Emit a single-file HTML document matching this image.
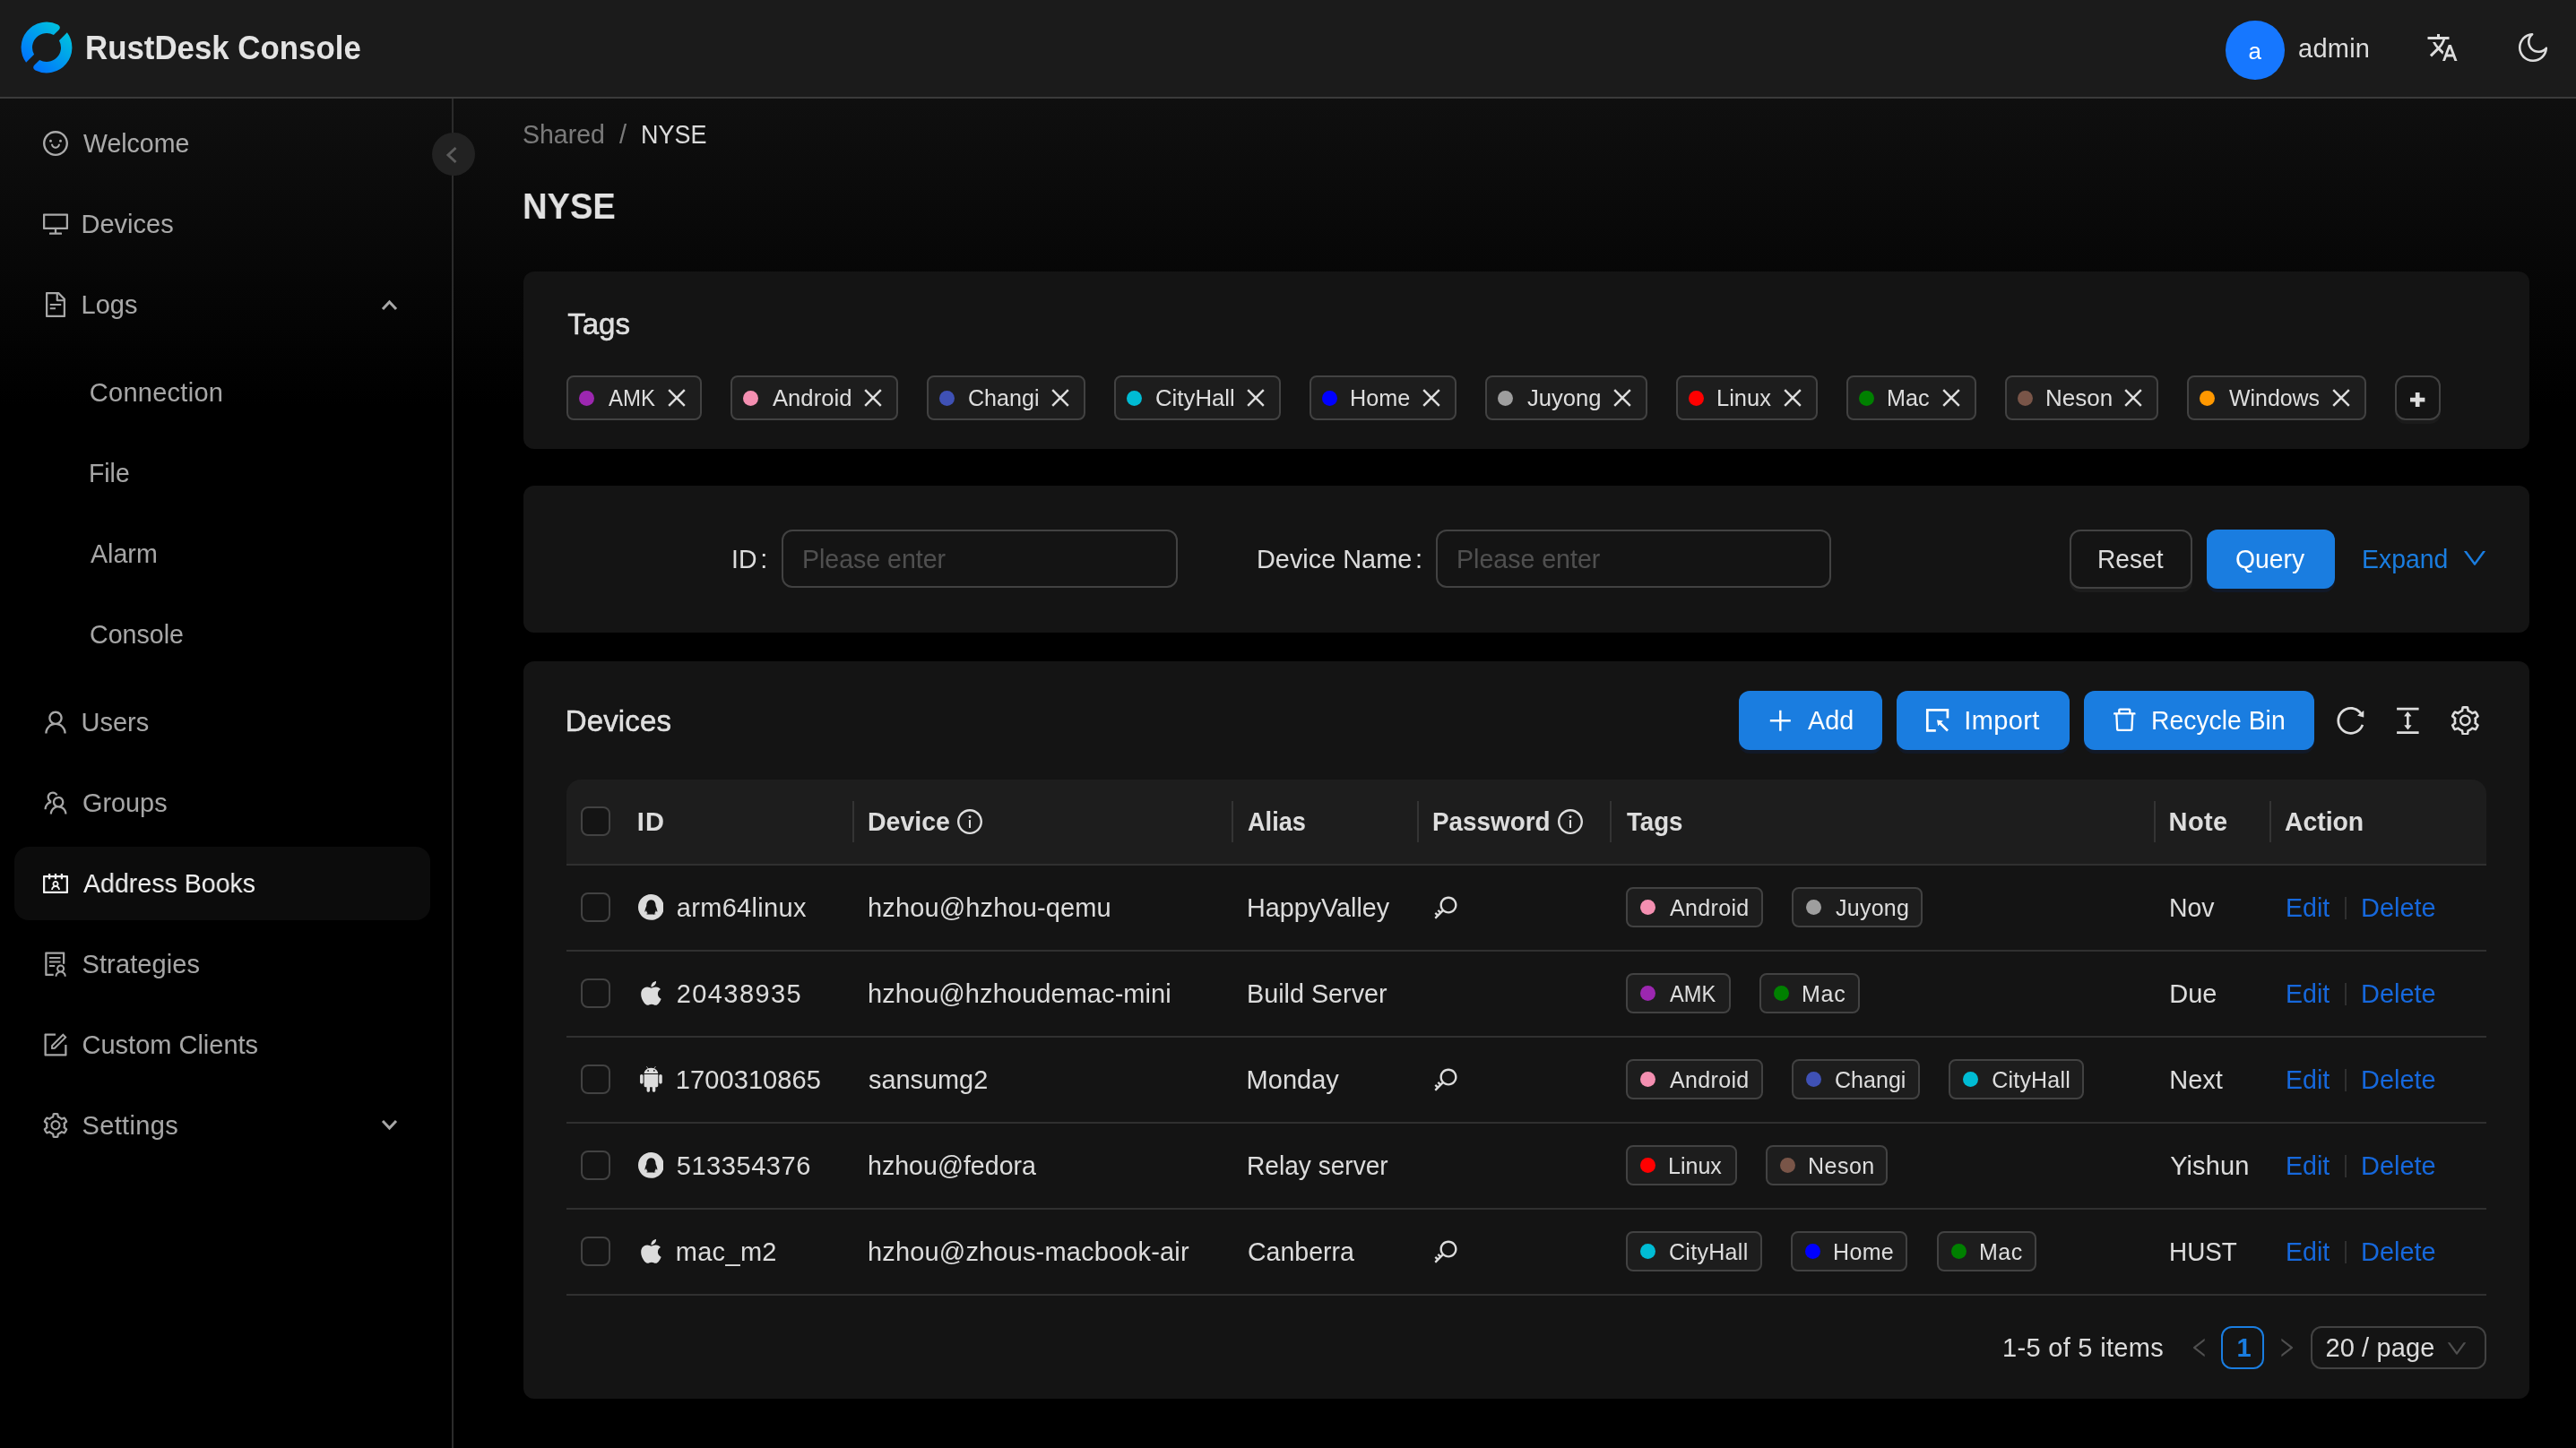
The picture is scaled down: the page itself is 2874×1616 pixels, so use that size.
<!DOCTYPE html><html lang="en"><head><meta charset="utf-8"><title>RustDesk Console</title><style>
*{box-sizing:border-box}
html,body{margin:0;padding:0}
body{width:2874px;height:1616px;overflow:hidden;position:relative;background:linear-gradient(#141414,#000 28%);font-family:"Liberation Sans",sans-serif;font-size:29px;color:rgba(255,255,255,.85)}
ul,li,h1,h2,h3,p{margin:0;padding:0;list-style:none;font-weight:400;font-size:inherit}
#app{position:absolute;left:0;top:0;width:2874px;height:1616px;will-change:transform}
.abs,header,aside,main,section,nav{position:absolute}
.ic{display:block}
header{left:0;top:0;width:2874px;height:110px;background:#1b1b1b;border-bottom:2px solid #3a3a3a}
aside{left:0;top:110px;width:506px;height:1506px;border-right:2px solid #2b2b2b}
.mi{position:absolute;left:16px;width:464px;height:82px;border-radius:16px;color:rgba(255,255,255,.65)}
.mi.sel{background:#0c0c0c;color:rgba(255,255,255,.95)}
.colbtn{position:absolute;left:482px;top:148px;width:48px;height:48px;border-radius:50%;background:#222;color:#5c5c5c}
main{left:506px;top:110px;width:2368px;height:1506px}
.card{position:absolute;left:584px;width:2238px;background:#141414;border-radius:12px}
.chip{position:absolute;border:2px solid #424242;background:#1d1d1d;border-radius:8px}
.dot{position:absolute;width:17px;height:17px;border-radius:50%}
.inp{position:absolute;border:2px solid #424242;border-radius:12px;background:#141414}
.ph{color:rgba(255,255,255,.25)}
.btn{position:absolute;border-radius:12px}
.btn.pri{background:#1a7de0;color:#fff;box-shadow:0 4px 0 rgba(0,60,180,.13)}
.btn.def{border:2px solid #424242;background:#141414;box-shadow:0 4px 0 rgba(255,255,255,.04)}
.lnk{color:#1a7de0}
.alnk{color:#1668dc}
table{position:absolute;border-collapse:separate;border-spacing:0;table-layout:fixed}
th,td{padding:0;position:relative;text-align:left;font-weight:400}
th{height:96px;background:#1d1d1d;border-bottom:2px solid #303030;font-weight:700}
td{height:96px;border-bottom:2px solid #303030}
th .sep{position:absolute;right:0;top:23.6px;width:2px;height:46px;background:#343434}
.cb{position:absolute;left:16px;top:30.3px;width:32.6px;height:32.6px;border:2px solid #424242;border-radius:8px;background:#141414}
.med{-webkit-text-stroke:.5px currentColor}
</style></head><body><div id="app"><header><svg class="abs" style="left:23px;top:24px" width="58" height="58" viewBox="0 0 58 58"><defs><linearGradient id="lg" gradientUnits="userSpaceOnUse" x1="50" y1="6" x2="10" y2="52"><stop offset="0" stop-color="#00c6dc"/><stop offset="1" stop-color="#0070ff"/></linearGradient></defs><path d="M36.86 15.06L42.27 9.64Q45.81 6.11 41.54 3.52A28.4 28.4 0 0 0 6.11 45.81L15.06 36.86A16.0 16.0 0 0 1 36.86 15.06ZM21.14 42.94L15.73 48.36Q12.19 51.89 16.46 54.48A28.4 28.4 0 0 0 51.89 12.19L42.94 21.14A16.0 16.0 0 0 1 21.14 42.94Z" fill="url(#lg)"/></svg><h1 style="position:absolute;left:95.12px;top:25.73px;height:56px;line-height:56px;font-size:37px;font-weight:700;transform:scaleX(0.9414);transform-origin:0 0;white-space:pre;color:rgba(255,255,255,.88);">RustDesk Console</h1><div class="abs" style="left:2483.30px;top:23.30px;width:65.40px;height:65.40px;border-radius:50%;background:#1677ff"></div><span style="position:absolute;left:2508.40px;top:37.80px;height:39px;line-height:39px;font-size:26px;white-space:pre;color:#fff;">a</span><span style="position:absolute;left:2564.00px;top:31.83px;height:44px;line-height:44px;letter-spacing:0.250px;white-space:pre;">admin</span><svg class="ic" viewBox="0 0 24 24" width="36" height="36" fill="currentColor" style="position:absolute;left:2706.5px;top:35px"><path d="M12.870 15.070l-2.540-2.510.030-.030c1.740-1.940 2.980-4.170 3.710-6.530H17V4h-7V2H8v2H1v1.990h11.170C11.500 7.920 10.440 9.750 9 11.350 8.070 10.320 7.300 9.190 6.690 8h-2c.73 1.630 1.730 3.170 2.980 4.560l-5.090 5.020L4 19l5-5 3.110 3.110.76-2.040zM18.500 10h-2L12 22h2l1.120-3h4.750L21 22h2l-4.500-12zm-2.620 7l1.620-4.330L19.120 17h-3.240z"/></svg><svg class="ic" viewBox="64 64 896 896" width="36" height="36" fill="currentColor" style="position:absolute;left:2808.00px;top:35.00px;"><path d="M489.500 111.660c30.650-1.800 45.980 36.440 22.580 56.330A243.350 243.350 0 00426 354c0 134.760 109.240 244 244 244 72.580 0 139.900-31.830 186.010-86.080 19.870-23.380 58.070-8.100 56.340 22.530C900.400 745.820 725.150 912 512.500 912 291.310 912 112 732.690 112 511.500c0-211.390 164.290-386.020 374.200-399.650l.2-.01zm-81.150 79.750l-4.110 1.360C271.100 237.940 176 364.090 176 511.500 176 697.340 326.660 848 512.500 848c148.280 0 274.940-96.200 319.450-230.410l.63-1.930-.11.070a307.060 307.060 0 01-159.730 46.260L670 662c-170.100 0-308-137.900-308-308 0-58.600 16.480-114.540 46.270-162.470z"/></svg></header><aside><ul><li class="mi" style="top:8.5px"><svg class="ic" viewBox="64 64 896 896" width="28" height="28" fill="currentColor" style="position:absolute;left:32.00px;top:27.00px;"><path d="M288 421a48 48 0 1096 0 48 48 0 10-96 0zm352 0a48 48 0 1096 0 48 48 0 10-96 0zM512 64C264.6 64 64 264.6 64 512s200.6 448 448 448 448-200.6 448-448S759.4 64 512 64zm263 711c-34.2 34.2-74 61-118.300 79.800C611 874.200 562.300 884 512 884c-50.300 0-99-9.800-144.800-29.200A370.400 370.400 0 01248.900 775c-34.200-34.200-61-74-79.800-118.300C149.800 611 140 562.300 140 512s9.800-99 29.200-144.800A370.400 370.400 0 01249 248.900c34.200-34.200 74-61 118.300-79.800C413 149.800 461.700 140 512 140c50.300 0 99 9.800 144.800 29.200A370.400 370.400 0 01775.100 249c34.200 34.200 61 74 79.800 118.300C874.200 413 884 461.700 884 512s-9.800 99-29.200 144.800A368.890 368.890 0 01775 775zM664 533h-48.100c-4.200 0-7.800 3.200-8.100 7.400C604 589.900 562.500 629 512 629s-92.100-39.100-95.800-88.600c-.3-4.200-3.900-7.400-8.100-7.400H360a8 8 0 00-8 8.400c4.400 84.300 74.500 151.600 160 151.600s155.600-67.300 160-151.600a8 8 0 00-8-8.400z"/></svg><span style="position:absolute;left:76.50px;top:19.33px;height:44px;line-height:44px;transform:scaleX(0.9833);transform-origin:0 0;white-space:pre;">Welcome</span></li><li class="mi" style="top:98.5px"><svg class="ic" viewBox="64 64 896 896" width="28" height="28" fill="currentColor" style="position:absolute;left:32.00px;top:27.00px;"><path d="M928 140H96c-17.700 0-32 14.300-32 32v496c0 17.700 14.300 32 32 32h380v112H304c-8.800 0-16 7.200-16 16v48c0 4.400 3.600 8 8 8h432c4.400 0 8-3.600 8-8v-48c0-8.800-7.200-16-16-16H548V700h380c17.700 0 32-14.300 32-32V172c0-17.700-14.300-32-32-32zm-40 488H136V212h752v416z"/></svg><span style="position:absolute;left:74.50px;top:19.33px;height:44px;line-height:44px;white-space:pre;">Devices</span></li><li class="mi" style="top:188.5px"><svg class="ic" viewBox="64 64 896 896" width="28" height="28" fill="currentColor" style="position:absolute;left:32.00px;top:27.00px;"><path d="M854.600 288.600L639.400 73.400c-6-6-14.100-9.400-22.600-9.400H192c-17.700 0-32 14.300-32 32v832c0 17.700 14.300 32 32 32h640c17.700 0 32-14.300 32-32V311.300c0-8.500-3.400-16.700-9.400-22.700zM790.200 326H602V137.800L790.200 326zm1.800 562H232V136h302v216a42 42 0 0042 42h216v494zM504 618H320c-4.400 0-8 3.600-8 8v48c0 4.400 3.600 8 8 8h184c4.400 0 8-3.600 8-8v-48c0-4.400-3.600-8-8-8zM312 490v48c0 4.400 3.600 8 8 8h384c4.400 0 8-3.600 8-8v-48c0-4.400-3.600-8-8-8H320c-4.400 0-8 3.600-8 8z"/></svg><span style="position:absolute;left:74.50px;top:19.33px;height:44px;line-height:44px;white-space:pre;">Logs</span><svg class="abs" style="left:409px;top:35.0px" width="19" height="13" viewBox="0 0 19 13"><path d="M2 11 L9.500 3 L17 11" fill="none" stroke="currentColor" stroke-width="3"/></svg></li><li class="mi" style="top:286.5px"><span style="position:absolute;left:83.80px;top:19.33px;height:44px;line-height:44px;letter-spacing:0.267px;white-space:pre;">Connection</span></li><li class="mi" style="top:376.5px"><span style="position:absolute;left:82.85px;top:19.33px;height:44px;line-height:44px;transform:scaleX(0.9773);transform-origin:0 0;white-space:pre;">File</span></li><li class="mi" style="top:466.5px"><span style="position:absolute;left:84.80px;top:19.33px;height:44px;line-height:44px;transform:scaleX(0.9865);transform-origin:0 0;white-space:pre;">Alarm</span></li><li class="mi" style="top:556.5px"><span style="position:absolute;left:83.81px;top:19.33px;height:44px;line-height:44px;transform:scaleX(0.9867);transform-origin:0 0;white-space:pre;">Console</span></li><li class="mi" style="top:654.5px"><svg class="ic" viewBox="64 64 896 896" width="28" height="28" fill="currentColor" style="position:absolute;left:32.00px;top:27.00px;"><path d="M858.500 763.600a374 374 0 00-80.600-119.500 375.630 375.630 0 00-119.500-80.600c-.4-.2-.8-.3-1.200-.5C719.500 518 760 444.700 760 362c0-137-111-248-248-248S264 225 264 362c0 82.700 40.500 156 102.800 201.100-.4.200-.8.300-1.200.5-44.800 18.900-85 46-119.500 80.600a375.630 375.630 0 00-80.600 119.500A371.700 371.700 0 00136 901.800a8 8 0 008 8.200h60c4.400 0 7.900-3.500 8-7.800 2-77.200 33-149.500 87.800-204.300 56.700-56.700 132-87.900 212.200-87.900s155.500 31.200 212.200 87.900C779 752.700 810 825 812 902.200c.1 4.400 3.600 7.800 8 7.800h60a8 8 0 008-8.200c-1-47.800-10.900-94.300-29.500-138.200zM512 534c-45.900 0-89.100-17.900-121.600-50.400S340 407.900 340 362c0-45.900 17.900-89.100 50.400-121.600S466.100 190 512 190s89.100 17.900 121.600 50.400S684 316.100 684 362c0 45.900-17.900 89.100-50.400 121.600S557.900 534 512 534z"/></svg><span style="position:absolute;left:74.50px;top:19.33px;height:44px;line-height:44px;white-space:pre;">Users</span></li><li class="mi" style="top:744.5px"><svg class="ic" viewBox="64 64 896 896" width="28" height="28" fill="currentColor" style="position:absolute;left:32.00px;top:27.00px;"><path d="M824.200 699.900a301.550 301.550 0 00-86.400-60.400C783.100 602.800 812 546.800 812 484c0-110.800-92.400-201.700-203.200-200-109.100 1.700-197 90.600-197 200 0 62.800 29 118.800 74.200 155.500a300.950 300.950 0 00-86.400 60.400C345 754.600 314 826.800 312 903.800a8 8 0 008 8.200h56c4.300 0 7.900-3.400 8-7.700 1.900-58 25.400-112.300 66.700-153.500A226.620 226.620 0 01612 684c60.900 0 118.200 23.700 161.300 66.800C814.500 792 838 846.300 840 904.300c.1 4.300 3.700 7.700 8 7.700h56a8 8 0 008-8.200c-2-77-33-149.200-87.800-203.900zM612 612c-34.200 0-66.400-13.300-90.500-37.500a126.860 126.860 0 01-37.500-91.800c.3-32.800 13.400-64.500 36.300-88 24-24.600 56.100-38.300 90.400-38.700 33.900-.3 66.800 12.900 91 36.600 24.800 24.300 38.400 56.800 38.400 91.400 0 34.200-13.300 66.300-37.500 90.500A127.300 127.300 0 01612 612zM361.500 510.400c-.9-8.700-1.400-17.500-1.400-26.400 0-15.900 1.500-31.400 4.300-46.500.7-3.600-1.200-7.300-4.500-8.800-13.600-6.100-26.100-14.500-36.900-25.100a127.540 127.540 0 01-38.700-95.400c.9-32.100 13.800-62.600 36.300-85.600 24.700-25.300 57.900-39.100 93.200-38.700 31.900.3 62.700 12.600 86 34.400 7.900 7.400 14.700 15.600 20.400 24.400 2 3.100 5.900 4.400 9.300 3.200 17.600-6.100 36.200-10.400 55.300-12.400 5.600-.6 8.800-6.600 6.300-11.600-32.500-64.300-98.900-108.700-175.700-109.900-110.900-1.700-203.300 89.200-203.300 199.900 0 62.800 28.900 118.800 74.200 155.500-31.800 14.700-61.100 35-86.500 60.400-54.800 54.700-85.800 126.900-87.800 204a8 8 0 008 8.200h56.100c4.300 0 7.900-3.400 8-7.700 1.900-58 25.400-112.300 66.700-153.500 29.400-29.400 65.400-49.800 104.700-59.700 3.900-1 6.500-4.700 6-8.700z"/></svg><span style="position:absolute;left:75.51px;top:19.33px;height:44px;line-height:44px;transform:scaleX(0.9946);transform-origin:0 0;white-space:pre;">Groups</span></li><li class="mi sel" style="top:834.5px"><svg class="ic" viewBox="64 64 896 896" width="28" height="28" fill="currentColor" style="position:absolute;left:32.00px;top:27.00px;"><path d="M594.300 601.500a111.800 111.800 0 0029.100-75.500c0-61.900-49.900-112-111.400-112s-111.400 50.100-111.400 112c0 29.100 11 55.500 29.100 75.500a158.090 158.090 0 00-74.600 126.100 8 8 0 008 8.400H407c4.200 0 7.600-3.300 7.900-7.500 3.800-50.600 46-90.500 97.200-90.500s93.400 40 97.200 90.500c.3 4.200 3.700 7.500 7.900 7.500H661a8 8 0 008-8.400c-2.800-53.300-32-99.700-74.700-126.100zM512 578c-28.500 0-51.700-23.300-51.700-52s23.200-52 51.700-52 51.700 23.300 51.700 52-23.200 52-51.700 52zm416-354H768v-56c0-4.400-3.600-8-8-8h-56c-4.400 0-8 3.600-8 8v56H548v-56c0-4.400-3.600-8-8-8h-56c-4.400 0-8 3.600-8 8v56H328v-56c0-4.400-3.600-8-8-8h-56c-4.400 0-8 3.600-8 8v56H96c-17.700 0-32 14.300-32 32v576c0 17.700 14.300 32 32 32h832c17.700 0 32-14.300 32-32V256c0-17.700-14.300-32-32-32zm-40 568H136V296h120v56c0 4.400 3.600 8 8 8h56c4.400 0 8-3.600 8-8v-56h148v56c0 4.400 3.600 8 8 8h56c4.400 0 8-3.600 8-8v-56h148v56c0 4.400 3.600 8 8 8h56c4.400 0 8-3.600 8-8v-56h120v496z"/></svg><span style="position:absolute;left:76.50px;top:19.33px;height:44px;line-height:44px;transform:scaleX(0.9845);transform-origin:0 0;white-space:pre;">Address Books</span></li><li class="mi" style="top:924.5px"><svg class="ic" viewBox="64 64 896 896" width="28" height="28" fill="currentColor" style="position:absolute;left:32.00px;top:27.00px;"><path d="M688 264c0-4.400-3.600-8-8-8H296c-4.400 0-8 3.600-8 8v48c0 4.400 3.600 8 8 8h384c4.400 0 8-3.600 8-8v-48zm-8 136H296c-4.400 0-8 3.600-8 8v48c0 4.400 3.600 8 8 8h384c4.400 0 8-3.600 8-8v-48c0-4.400-3.600-8-8-8zM480 544H296c-4.400 0-8 3.600-8 8v48c0 4.400 3.600 8 8 8h184c4.400 0 8-3.600 8-8v-48c0-4.400-3.600-8-8-8zm-48 308H208V148h560v344c0 4.400 3.600 8 8 8h56c4.400 0 8-3.600 8-8V108c0-17.700-14.300-32-32-32H168c-17.700 0-32 14.300-32 32v784c0 17.700 14.300 32 32 32h264c4.400 0 8-3.600 8-8v-56c0-4.400-3.600-8-8-8zm356.800-74.400c29-26.300 47.200-64.300 47.200-106.600 0-79.500-64.500-144-144-144s-144 64.500-144 144c0 42.300 18.200 80.300 47.200 106.600-57 32.500-96.200 92.700-99.200 162.100-.2 4.500 3.500 8.300 8 8.300h48.100c4.200 0 7.700-3.300 8-7.600C564 871.200 621.700 816 692 816s128 55.200 131.900 124.400c.2 4.200 3.700 7.600 8 7.600H880c4.600 0 8.200-3.800 8-8.300-2.900-69.500-42.200-129.600-99.200-162.100zM692 591c44.200 0 80 35.800 80 80s-35.800 80-80 80-80-35.800-80-80 35.800-80 80-80z"/></svg><span style="position:absolute;left:75.50px;top:19.33px;height:44px;line-height:44px;letter-spacing:0.111px;white-space:pre;">Strategies</span></li><li class="mi" style="top:1014.5px"><svg class="ic" viewBox="64 64 896 896" width="28" height="28" fill="currentColor" style="position:absolute;left:32.00px;top:27.00px;"><path d="M904 512h-56c-4.400 0-8 3.600-8 8v320H184V184h320c4.400 0 8-3.600 8-8v-56c0-4.400-3.600-8-8-8H144c-17.700 0-32 14.300-32 32v736c0 17.700 14.300 32 32 32h736c17.700 0 32-14.300 32-32V520c0-4.400-3.600-8-8-8z"/><path d="M355.900 534.900L354 653.800c-.1 8.900 7.100 16.200 16 16.200h.4l118-2.900c2-.1 4-.9 5.400-2.300l415.900-415c3.100-3.100 3.100-8.200 0-11.300L785.400 114.300c-1.600-1.600-3.600-2.300-5.700-2.300s-4.100.8-5.700 2.300l-415.800 415a8.300 8.300 0 00-2.300 5.600zm63.500 23.600L779.700 199l45.200 45.100-360.500 359.700-45.700 1.100.7-46.400z"/></svg><span style="position:absolute;left:75.50px;top:19.33px;height:44px;line-height:44px;white-space:pre;">Custom Clients</span></li><li class="mi" style="top:1104.5px"><svg class="ic" viewBox="64 64 896 896" width="28" height="28" fill="currentColor" style="position:absolute;left:32.00px;top:27.00px;"><path d="M924.800 625.700l-65.500-56c3.100-19 4.700-38.400 4.700-57.800s-1.600-38.800-4.700-57.800l65.500-56a32.030 32.030 0 009.300-35.200l-.9-2.600a442.090 442.090 0 00-79.700-137.900l-1.800-2.100a32.120 32.120 0 00-35.100-9.500l-81.300 28.900c-30-24.600-63.500-44-99.700-57.600l-15.700-85a32.050 32.050 0 00-25.800-25.700l-2.700-.5c-52.100-9.400-106.900-9.400-159 0l-2.700.5a32.050 32.050 0 00-25.800 25.700l-15.800 85.400a351.860 351.860 0 00-99 57.400l-81.900-29.100a32 32 0 00-35.100 9.500l-1.800 2.100a446.020 446.020 0 00-79.700 137.900l-.9 2.600c-4.500 12.500-.8 26.500 9.300 35.200l66.300 56.600c-3.100 18.800-4.600 38-4.600 57.100 0 19.200 1.500 38.400 4.600 57.100L99 625.500a32.030 32.030 0 00-9.300 35.200l.9 2.600c18.100 50.400 44.900 96.900 79.700 137.900l1.800 2.100a32.120 32.120 0 0035.100 9.500l81.900-29.100c29.800 24.500 63.100 43.900 99 57.400l15.800 85.400a32.050 32.050 0 0025.800 25.700l2.700.5a449.400 449.400 0 00159 0l2.700-.5a32.050 32.050 0 0025.800-25.700l15.700-85a350 350 0 0099.700-57.600l81.300 28.900a32 32 0 0035.100-9.500l1.800-2.100c34.800-41.100 61.600-87.500 79.700-137.900l.9-2.600c4.500-12.300.8-26.300-9.300-35zM788.300 465.900c2.500 15.100 3.800 30.600 3.800 46.100s-1.300 31-3.800 46.100l-6.600 40.100 74.700 63.900a370.030 370.030 0 01-42.600 73.600L721 702.800l-31.400 25.800c-23.900 19.600-50.500 35-79.300 45.800l-38.100 14.300-17.900 97a377.500 377.500 0 01-85 0l-17.900-97.200-37.800-14.500c-28.500-10.800-55-26.200-78.700-45.700l-31.400-25.900-93.400 33.200c-17-22.900-31.200-47.600-42.600-73.600l75.500-64.500-6.500-40c-2.400-14.900-3.700-30.300-3.700-45.500 0-15.300 1.200-30.600 3.700-45.500l6.500-40-75.500-64.500c11.300-26.100 25.600-50.700 42.600-73.600l93.400 33.200 31.400-25.900c23.700-19.500 50.200-34.900 78.700-45.700l37.900-14.300 17.900-97.200c28.100-3.200 56.800-3.200 85 0l17.900 97 38.100 14.300c28.700 10.800 55.400 26.200 79.300 45.800l31.400 25.800 92.800-32.900c17 22.900 31.200 47.600 42.600 73.600L781.800 426l6.500 39.900zM512 326c-97.200 0-176 78.800-176 176s78.800 176 176 176 176-78.800 176-176-78.800-176-176-176zm79.200 255.200A111.600 111.600 0 01512 614c-29.900 0-58-11.700-79.200-32.800A111.600 111.600 0 01400 502c0-29.900 11.700-58 32.800-79.200C454 401.600 482.100 390 512 390c29.900 0 58 11.600 79.200 32.800A111.600 111.600 0 01624 502c0 29.900-11.700 58-32.800 79.200z"/></svg><span style="position:absolute;left:75.50px;top:19.33px;height:44px;line-height:44px;letter-spacing:0.357px;white-space:pre;">Settings</span><svg class="abs" style="left:409px;top:34.0px" width="19" height="13" viewBox="0 0 19 13"><path d="M2 2 L9.500 10 L17 2" fill="none" stroke="currentColor" stroke-width="3"/></svg></li></ul></aside><div class="colbtn"><svg class="abs" style="left:15px;top:14.500px" width="14" height="20" viewBox="0 0 14 20"><path d="M11.500 2 L3 10 L11.500 18" fill="none" stroke="currentColor" stroke-width="3"/></svg></div><main><nav><span style="position:absolute;left:77.42px;top:17.83px;height:44px;line-height:44px;transform:scaleX(0.9824);transform-origin:0 0;white-space:pre;color:rgba(255,255,255,.45);">Shared</span><span style="position:absolute;left:185.00px;top:17.83px;height:44px;line-height:44px;white-space:pre;color:rgba(255,255,255,.45);">/</span><span style="position:absolute;left:208.54px;top:17.83px;height:44px;line-height:44px;transform:scaleX(0.9289);transform-origin:0 0;white-space:pre;">NYSE</span></nav><h2 style="position:absolute;left:76.56px;top:89.48px;height:62px;line-height:62px;font-size:41.5px;font-weight:700;transform:scaleX(0.9182);transform-origin:0 0;white-space:pre;color:rgba(255,255,255,.88);">NYSE</h2></main><section class="card" style="top:303px;height:198px"><h3 class="med" style="position:absolute;left:49.20px;top:34.18px;height:50px;line-height:50px;font-size:33px;white-space:pre;">Tags</h3><span class="chip" style="left:48.00px;top:116.20px;width:151.00px;height:49.40px;"><i class="dot" style="left:11.8px;top:14.50px;background:#9c27b0"></i><span style="position:absolute;left:44.80px;top:2.50px;height:40px;line-height:40px;font-size:26.5px;transform:scaleX(0.9053);transform-origin:0 0;white-space:pre;">AMK</span><svg class="abs" style="left:108.10px;top:9.70px" width="26" height="26" viewBox="0 0 26 26"><path d="M4.200 4.200L21.800 21.800M21.800 4.200L4.200 21.800" stroke="currentColor" stroke-width="2.500" fill="none"/></svg></span><span class="chip" style="left:231.00px;top:116.20px;width:186.50px;height:49.40px;"><i class="dot" style="left:11.8px;top:14.50px;background:#f48fb1"></i><span style="position:absolute;left:44.80px;top:2.50px;height:40px;line-height:40px;font-size:26.5px;transform:scaleX(0.9678);transform-origin:0 0;white-space:pre;">Android</span><svg class="abs" style="left:143.60px;top:9.70px" width="26" height="26" viewBox="0 0 26 26"><path d="M4.200 4.200L21.800 21.800M21.800 4.200L4.200 21.800" stroke="currentColor" stroke-width="2.500" fill="none"/></svg></span><span class="chip" style="left:450.00px;top:116.20px;width:177.00px;height:49.40px;"><i class="dot" style="left:11.8px;top:14.50px;background:#3f51b5"></i><span style="position:absolute;left:43.85px;top:2.50px;height:40px;line-height:40px;font-size:26.5px;transform:scaleX(0.9463);transform-origin:0 0;white-space:pre;">Changi</span><svg class="abs" style="left:134.10px;top:9.70px" width="26" height="26" viewBox="0 0 26 26"><path d="M4.200 4.200L21.800 21.800M21.800 4.200L4.200 21.800" stroke="currentColor" stroke-width="2.500" fill="none"/></svg></span><span class="chip" style="left:659.00px;top:116.20px;width:186.00px;height:49.40px;"><i class="dot" style="left:11.8px;top:14.50px;background:#00bcd4"></i><span style="position:absolute;left:43.83px;top:2.50px;height:40px;line-height:40px;font-size:26.5px;transform:scaleX(0.9730);transform-origin:0 0;white-space:pre;">CityHall</span><svg class="abs" style="left:143.10px;top:9.70px" width="26" height="26" viewBox="0 0 26 26"><path d="M4.200 4.200L21.800 21.800M21.800 4.200L4.200 21.800" stroke="currentColor" stroke-width="2.500" fill="none"/></svg></span><span class="chip" style="left:877.00px;top:116.20px;width:164.00px;height:49.40px;"><i class="dot" style="left:11.8px;top:14.50px;background:#0000ff"></i><span style="position:absolute;left:42.90px;top:2.50px;height:40px;line-height:40px;font-size:26.5px;transform:scaleX(0.9500);transform-origin:0 0;white-space:pre;">Home</span><svg class="abs" style="left:121.10px;top:9.70px" width="26" height="26" viewBox="0 0 26 26"><path d="M4.200 4.200L21.800 21.800M21.800 4.200L4.200 21.800" stroke="currentColor" stroke-width="2.500" fill="none"/></svg></span><span class="chip" style="left:1073.00px;top:116.20px;width:180.50px;height:49.40px;"><i class="dot" style="left:11.8px;top:14.50px;background:#9e9e9e"></i><span style="position:absolute;left:44.80px;top:2.50px;height:40px;line-height:40px;font-size:26.5px;transform:scaleX(0.9655);transform-origin:0 0;white-space:pre;">Juyong</span><svg class="abs" style="left:137.60px;top:9.70px" width="26" height="26" viewBox="0 0 26 26"><path d="M4.200 4.200L21.800 21.800M21.800 4.200L4.200 21.800" stroke="currentColor" stroke-width="2.500" fill="none"/></svg></span><span class="chip" style="left:1286.00px;top:116.20px;width:158.00px;height:49.40px;"><i class="dot" style="left:11.8px;top:14.50px;background:#ff0000"></i><span style="position:absolute;left:42.88px;top:2.50px;height:40px;line-height:40px;font-size:26.5px;transform:scaleX(0.9607);transform-origin:0 0;white-space:pre;">Linux</span><svg class="abs" style="left:115.10px;top:9.70px" width="26" height="26" viewBox="0 0 26 26"><path d="M4.200 4.200L21.800 21.800M21.800 4.200L4.200 21.800" stroke="currentColor" stroke-width="2.500" fill="none"/></svg></span><span class="chip" style="left:1476.00px;top:116.20px;width:145.00px;height:49.40px;"><i class="dot" style="left:11.8px;top:14.50px;background:#008000"></i><span style="position:absolute;left:42.90px;top:2.50px;height:40px;line-height:40px;font-size:26.5px;transform:scaleX(0.9500);transform-origin:0 0;white-space:pre;">Mac</span><svg class="abs" style="left:102.10px;top:9.70px" width="26" height="26" viewBox="0 0 26 26"><path d="M4.200 4.200L21.800 21.800M21.800 4.200L4.200 21.800" stroke="currentColor" stroke-width="2.500" fill="none"/></svg></span><span class="chip" style="left:1653.00px;top:116.20px;width:171.00px;height:49.40px;"><i class="dot" style="left:11.8px;top:14.50px;background:#795548"></i><span style="position:absolute;left:42.84px;top:2.50px;height:40px;line-height:40px;font-size:26.5px;transform:scaleX(0.9808);transform-origin:0 0;white-space:pre;">Neson</span><svg class="abs" style="left:128.10px;top:9.70px" width="26" height="26" viewBox="0 0 26 26"><path d="M4.200 4.200L21.800 21.800M21.800 4.200L4.200 21.800" stroke="currentColor" stroke-width="2.500" fill="none"/></svg></span><span class="chip" style="left:1856.00px;top:116.20px;width:200.00px;height:49.40px;"><i class="dot" style="left:11.8px;top:14.50px;background:#ff9800"></i><span style="position:absolute;left:44.80px;top:2.50px;height:40px;line-height:40px;font-size:26.5px;transform:scaleX(0.9402);transform-origin:0 0;white-space:pre;">Windows</span><svg class="abs" style="left:157.10px;top:9.70px" width="26" height="26" viewBox="0 0 26 26"><path d="M4.200 4.200L21.800 21.800M21.800 4.200L4.200 21.800" stroke="currentColor" stroke-width="2.500" fill="none"/></svg></span><span class="abs" style="left:2088.20px;top:116.20px;width:50.50px;height:49.40px;border:2px solid #424242;border-radius:12px;background:#141414;box-shadow:0 4px 0 rgba(255,255,255,.03)"><svg class="abs" style="left:15.100px;top:16.700px" width="16.400" height="16.400" viewBox="0 0 16 16"><path d="M8 0v16M0 8h16" stroke="currentColor" stroke-width="4.600" fill="none"/></svg></span></section><section class="card" style="top:542px;height:164px"><span style="position:absolute;left:231.54px;top:60.33px;height:44px;line-height:44px;transform:scaleX(0.9808);transform-origin:0 0;white-space:pre;">ID</span><span style="position:absolute;left:264.30px;top:60.33px;height:44px;line-height:44px;white-space:pre;">:</span><div class="inp" style="left:288.00px;top:49.30px;width:442.00px;height:65.00px;"><span class="ph" style="position:absolute;left:21.23px;top:9.03px;height:44px;line-height:44px;transform:scaleX(0.9832);transform-origin:0 0;white-space:pre;">Please enter</span></div><span style="position:absolute;left:817.51px;top:60.33px;height:44px;line-height:44px;transform:scaleX(0.9953);transform-origin:0 0;white-space:pre;">Device Name</span><span style="position:absolute;left:995.00px;top:60.33px;height:44px;line-height:44px;white-space:pre;">:</span><div class="inp" style="left:1018.00px;top:49.30px;width:441.00px;height:65.00px;"><span class="ph" style="position:absolute;left:21.03px;top:9.03px;height:44px;line-height:44px;transform:scaleX(0.9845);transform-origin:0 0;white-space:pre;">Please enter</span></div><div class="btn def" style="left:1725.00px;top:49.20px;width:137.00px;height:65.40px;"><span style="position:absolute;left:28.56px;top:9.13px;height:44px;line-height:44px;transform:scaleX(0.9703);transform-origin:0 0;white-space:pre;">Reset</span></div><div class="btn pri" style="left:1878.00px;top:49.20px;width:142.50px;height:65.40px;"><span style="position:absolute;left:31.82px;top:11.13px;height:44px;line-height:44px;transform:scaleX(0.9769);transform-origin:0 0;white-space:pre;">Query</span></div><span class="lnk" style="position:absolute;left:2051.44px;top:60.33px;height:44px;line-height:44px;transform:scaleX(0.9789);transform-origin:0 0;white-space:pre;">Expand</span><svg class="ic" viewBox="64 64 896 896" width="28" height="28" fill="currentColor" style="position:absolute;left:2162.50px;top:67.30px;color:#1a7de0;"><path d="M884 256h-75c-5.100 0-9.900 2.500-12.900 6.600L512 654.200 227.900 262.600c-3-4.100-7.800-6.600-12.900-6.600h-75c-6.500 0-10.300 7.400-6.500 12.700l352.600 486.100c12.800 17.600 39 17.600 51.700 0l352.600-486.100c3.900-5.300.1-12.700-6.400-12.700z"/></svg></section><section class="card" style="top:738px;height:822.5px"><h3 class="med" style="position:absolute;left:46.70px;top:41.98px;height:50px;line-height:50px;font-size:33px;letter-spacing:0.167px;white-space:pre;">Devices</h3><div class="btn pri" style="left:1356.00px;top:33.20px;width:160.00px;height:65.40px;"><svg class="ic" viewBox="64 64 896 896" width="28.6" height="28.6" fill="currentColor" style="position:absolute;left:31.70px;top:18.50px;"><path d="M482 152h60q8 0 8 8v704q0 8-8 8h-60q-8 0-8-8V160q0-8 8-8z"/><path d="M192 474h672q8 0 8 8v60q0 8-8 8H160q-8 0-8-8v-60q0-8 8-8z"/></svg><span style="position:absolute;left:76.90px;top:11.13px;height:44px;line-height:44px;transform:scaleX(0.9920);transform-origin:0 0;white-space:pre;">Add</span></div><div class="btn pri" style="left:1532.00px;top:33.20px;width:193.00px;height:65.40px;"><svg class="abs" style="left:30.700px;top:17.800px" width="30" height="30" viewBox="0 0 30 30"><path d="M12.800 26.300H3.300V3.300h22.600v9.300" fill="none" stroke="currentColor" stroke-width="2.700"/><path d="M26 26.500 L17 17.500" stroke="currentColor" stroke-width="2.700" fill="none"/><path d="M14 14.400 L20.800 15.600 L15.200 21.200z" fill="currentColor"/></svg><span style="position:absolute;left:75.30px;top:11.13px;height:44px;line-height:44px;letter-spacing:0.360px;white-space:pre;">Import</span></div><div class="btn pri" style="left:1741.00px;top:33.20px;width:257.00px;height:65.40px;"><svg class="ic" viewBox="64 64 896 896" width="28.6" height="28.6" fill="currentColor" style="position:absolute;left:31.40px;top:18.30px;"><path d="M360 184h-8c4.400 0 8-3.600 8-8v8h304v-8c0 4.400 3.600 8 8 8h-8v72h72v-80c0-35.300-28.700-64-64-64H352c-35.300 0-64 28.700-64 64v80h72v-72zm504 72H160c-17.700 0-32 14.300-32 32v32c0 4.400 3.600 8 8 8h60.400l24.700 523c1.600 34.100 29.800 61 63.900 61h454c34.200 0 62.300-26.800 63.900-61l24.700-523H888c4.400 0 8-3.600 8-8v-32c0-17.700-14.300-32-32-32zM731.300 840H292.700l-24.200-512h487l-24.200 512z"/></svg><span style="position:absolute;left:75.25px;top:11.13px;height:44px;line-height:44px;transform:scaleX(0.9773);transform-origin:0 0;white-space:pre;">Recycle Bin</span></div><svg class="ic" viewBox="64 64 896 896" width="32.7" height="32.7" fill="currentColor" style="position:absolute;left:2021.60px;top:49.60px;"><path d="M909.100 209.300l-56.400 44.100C775.800 155.100 656.200 92 521.900 92 290 92 102.300 279.500 102 511.500 101.700 743.700 289.800 932 521.900 932c181.300 0 335.800-115 394.600-276.100 1.500-4.200-.7-8.900-4.900-10.300l-56.700-19.500a8 8 0 00-10.100 4.800c-1.800 5-3.800 10-5.900 14.900-17.300 41-42.100 77.800-73.700 109.400A344.770 344.770 0 01655.900 829c-42.300 17.900-87.400 27-133.800 27-46.500 0-91.500-9.100-133.800-27A341.500 341.500 0 01279 755.200a342.160 342.160 0 01-73.700-109.400c-17.900-42.400-27-87.400-27-133.900s9.100-91.500 27-133.900c17.300-41 42.100-77.800 73.700-109.400 31.600-31.600 68.400-56.400 109.300-73.800 42.300-17.900 87.400-27 133.800-27 46.500 0 91.500 9.100 133.800 27a341.500 341.500 0 01109.300 73.800c9.900 9.900 19.200 20.400 27.800 31.400l-60.200 47a8 8 0 003 14.100l175.600 43c5 1.200 9.900-2.600 9.900-7.700l.8-180.900c-.1-6.600-7.800-10.300-13-6.200z"/></svg><svg class="ic" viewBox="64 64 896 896" width="32.7" height="32.7" fill="currentColor" style="position:absolute;left:2085.60px;top:49.60px;"><path d="M840 836H184c-4.400 0-8 3.600-8 8v60c0 4.400 3.600 8 8 8h656c4.400 0 8-3.600 8-8v-60c0-4.400-3.600-8-8-8zm0-724H184c-4.400 0-8 3.600-8 8v60c0 4.400 3.600 8 8 8h656c4.400 0 8-3.600 8-8v-60c0-4.400-3.600-8-8-8zM610.800 378c6 0 9.400-7 5.700-11.700L515.700 238.700a7.140 7.140 0 00-11.300 0L403.600 366.300a7.230 7.230 0 005.700 11.700H476v268h-62.800c-6 0-9.400 7-5.700 11.700l100.800 127.500c2.900 3.700 8.500 3.700 11.300 0l100.800-127.500c3.700-4.700.4-11.700-5.700-11.700H548V378h62.800z"/></svg><svg class="ic" viewBox="64 64 896 896" width="32.7" height="32.7" fill="currentColor" style="position:absolute;left:2149.80px;top:49.80px;"><path d="M924.800 625.700l-65.500-56c3.100-19 4.700-38.400 4.700-57.800s-1.600-38.800-4.700-57.800l65.500-56a32.030 32.030 0 009.300-35.200l-.9-2.600a442.090 442.090 0 00-79.700-137.900l-1.800-2.100a32.120 32.120 0 00-35.100-9.500l-81.300 28.900c-30-24.600-63.500-44-99.700-57.600l-15.700-85a32.050 32.050 0 00-25.800-25.700l-2.700-.5c-52.100-9.400-106.900-9.400-159 0l-2.700.5a32.050 32.050 0 00-25.800 25.700l-15.800 85.400a351.860 351.860 0 00-99 57.400l-81.900-29.100a32 32 0 00-35.100 9.500l-1.800 2.100a446.020 446.020 0 00-79.700 137.900l-.9 2.600c-4.500 12.500-.8 26.500 9.300 35.200l66.300 56.600c-3.100 18.800-4.600 38-4.600 57.100 0 19.200 1.500 38.400 4.600 57.100L99 625.500a32.030 32.030 0 00-9.300 35.200l.9 2.600c18.100 50.400 44.900 96.900 79.700 137.900l1.800 2.100a32.120 32.120 0 0035.100 9.500l81.900-29.100c29.800 24.500 63.100 43.900 99 57.400l15.800 85.400a32.050 32.050 0 0025.800 25.700l2.700.5a449.400 449.400 0 00159 0l2.700-.5a32.050 32.050 0 0025.800-25.700l15.700-85a350 350 0 0099.700-57.600l81.300 28.900a32 32 0 0035.100-9.500l1.800-2.100c34.800-41.100 61.600-87.500 79.700-137.900l.9-2.600c4.500-12.300.8-26.300-9.300-35zM788.300 465.900c2.500 15.100 3.800 30.600 3.800 46.100s-1.300 31-3.800 46.100l-6.600 40.100 74.700 63.900a370.030 370.030 0 01-42.600 73.600L721 702.800l-31.400 25.800c-23.900 19.600-50.500 35-79.300 45.800l-38.100 14.300-17.900 97a377.500 377.500 0 01-85 0l-17.900-97.200-37.800-14.500c-28.500-10.800-55-26.200-78.700-45.700l-31.400-25.900-93.400 33.200c-17-22.900-31.200-47.600-42.600-73.600l75.500-64.500-6.500-40c-2.400-14.900-3.700-30.300-3.700-45.500 0-15.300 1.200-30.600 3.700-45.500l6.500-40-75.500-64.500c11.300-26.100 25.600-50.700 42.600-73.600l93.400 33.200 31.400-25.900c23.700-19.500 50.200-34.900 78.700-45.700l37.900-14.300 17.900-97.200c28.100-3.200 56.800-3.200 85 0l17.900 97 38.100 14.300c28.700 10.800 55.400 26.200 79.300 45.800l31.400 25.800 92.800-32.900c17 22.900 31.200 47.600 42.600 73.600L781.800 426l6.500 39.900zM512 326c-97.200 0-176 78.800-176 176s78.800 176 176 176 176-78.800 176-176-78.800-176-176-176zm79.200 255.200A111.600 111.600 0 01512 614c-29.900 0-58-11.700-79.200-32.800A111.600 111.600 0 01400 502c0-29.900 11.700-58 32.800-79.200C454 401.600 482.100 390 512 390c29.900 0 58 11.600 79.200 32.800A111.600 111.600 0 01624 502c0 29.900-11.700 58-32.800 79.200z"/></svg><table style="left:48px;top:132px;width:2142px"><colgroup><col style="width:64px"><col style="width:257px"><col style="width:423px"><col style="width:207px"><col style="width:215px"><col style="width:607px"><col style="width:129px"><col style="width:240px"></colgroup><thead><tr><th style="border-top-left-radius:16px"><span class="cb"></span></th><th><span style="position:absolute;left:14.70px;top:25.33px;height:44px;line-height:44px;font-weight:700;letter-spacing:1.300px;white-space:pre;">ID</span><i class="sep"></i></th><th><span style="position:absolute;left:14.53px;top:25.33px;height:44px;line-height:44px;font-weight:700;transform:scaleX(0.9835);transform-origin:0 0;white-space:pre;">Device</span><svg class="ic" viewBox="64 64 896 896" width="28" height="28" fill="currentColor" style="position:absolute;left:115.20px;top:33.00px;color:rgba(255,255,255,.85)"><path d="M512 64C264.600 64 64 264.600 64 512s200.600 448 448 448 448-200.600 448-448S759.400 64 512 64zm0 820c-205.400 0-372-166.600-372-372s166.600-372 372-372 372 166.600 372 372-166.600 372-372 372z"/><path d="M464 336a48 48 0 1096 0 48 48 0 10-96 0zm72 112h-48c-4.400 0-8 3.600-8 8v272c0 4.400 3.600 8 8 8h48c4.400 0 8-3.600 8-8V456c0-4.400-3.600-8-8-8z"/></svg><i class="sep"></i></th><th><span style="position:absolute;left:15.66px;top:25.33px;height:44px;line-height:44px;font-weight:700;transform:scaleX(0.9368);transform-origin:0 0;white-space:pre;">Alias</span><i class="sep"></i></th><th><span style="position:absolute;left:14.88px;top:25.33px;height:44px;line-height:44px;font-weight:700;transform:scaleX(0.9597);transform-origin:0 0;white-space:pre;">Password</span><svg class="ic" viewBox="64 64 896 896" width="28" height="28" fill="currentColor" style="position:absolute;left:154.50px;top:33.00px;color:rgba(255,255,255,.85)"><path d="M512 64C264.600 64 64 264.600 64 512s200.600 448 448 448 448-200.600 448-448S759.400 64 512 64zm0 820c-205.400 0-372-166.600-372-372s166.600-372 372-372 372 166.600 372 372-166.600 372-372 372z"/><path d="M464 336a48 48 0 1096 0 48 48 0 10-96 0zm72 112h-48c-4.400 0-8 3.600-8 8v272c0 4.400 3.600 8 8 8h48c4.400 0 8-3.600 8-8V456c0-4.400-3.600-8-8-8z"/></svg><i class="sep"></i></th><th><span style="position:absolute;left:17.00px;top:25.33px;height:44px;line-height:44px;font-weight:700;transform:scaleX(0.9538);transform-origin:0 0;white-space:pre;">Tags</span><i class="sep"></i></th><th><span style="position:absolute;left:14.50px;top:25.33px;height:44px;line-height:44px;font-weight:700;letter-spacing:0.433px;white-space:pre;">Note</span><i class="sep"></i></th><th style="border-top-right-radius:16px"><span style="position:absolute;left:15.22px;top:25.33px;height:44px;line-height:44px;font-weight:700;transform:scaleX(0.9773);transform-origin:0 0;white-space:pre;">Action</span></th></tr></thead><tbody><tr><td><span class="cb"></span></td><td><svg class="ic" viewBox="64 64 896 896" width="28.8" height="28.8" fill="currentColor" style="position:absolute;left:15.50px;top:32.10px;"><path d="M512 64C264.600 64 64 264.600 64 512s200.600 448 448 448 448-200.600 448-448S759.400 64 512 64zm210.500 612.400c-11.500 1.400-44.900-52.700-44.900-52.700 0 31.300-16.200 72.200-51.100 101.800 16.900 5.200 54.900 19.200 45.900 34.400-7.300 12.300-125.600 7.900-159.800 4-34.200 3.800-152.500 8.300-159.800-4-9.100-15.200 28.900-29.200 45.800-34.400-35-29.500-51.100-70.400-51.100-101.800 0 0-33.400 54.100-44.900 52.700-5.400-.7-12.400-29.600 9.400-99.700 10.300-33 22-60.500 40.200-105.800-3.100-116.900 45.300-215 160.400-215 113.900 0 163.300 96.100 160.400 215 18.100 45.200 29.900 72.800 40.200 105.800 21.700 70.100 14.600 99.100 9.300 99.700z"/></svg><span style="position:absolute;left:58.70px;top:25.03px;height:44px;line-height:44px;letter-spacing:0.333px;white-space:pre;">arm64linux</span></td><td><span style="position:absolute;left:15.00px;top:25.03px;height:44px;line-height:44px;letter-spacing:0.133px;white-space:pre;">hzhou@hzhou-qemu</span></td><td><span style="position:absolute;left:14.62px;top:25.03px;height:44px;line-height:44px;transform:scaleX(0.9906);transform-origin:0 0;white-space:pre;">HappyValley</span></td><td><svg class="ic" viewBox="64 64 896 896" width="28" height="28" fill="currentColor" style="position:absolute;left:15.50px;top:32.50px;"><path d="M608 112c-167.900 0-304 136.100-304 304 0 70.300 23.900 135 63.900 186.500l-41.100 41.100-62.300-62.300a8.150 8.150 0 00-11.400 0l-39.800 39.800a8.150 8.150 0 000 11.400l62.300 62.300-44.900 44.900-62.300-62.300a8.150 8.150 0 00-11.400 0l-39.800 39.800a8.150 8.150 0 000 11.400l62.300 62.300-65.300 65.300a8.030 8.030 0 000 11.300l42.300 42.300c3.100 3.100 8.200 3.100 11.300 0l253.600-253.600A304.060 304.060 0 00608 720c167.900 0 304-136.100 304-304S775.900 112 608 112zm161.200 465.200C726.200 620.300 668.900 644 608 644c-60.900 0-118.200-23.700-161.200-66.800-43.100-43-66.800-100.300-66.800-161.200 0-60.900 23.700-118.200 66.800-161.200 43-43.100 100.300-66.800 161.200-66.800 60.900 0 118.200 23.700 161.200 66.800 43.100 43 66.800 100.300 66.800 161.200 0 60.900-23.700 118.200-66.800 161.200z"/></svg></td><td><span class="chip" style="left:16.00px;top:24.20px;width:152.50px;height:44.60px;"><i class="dot" style="left:13.8px;top:12.00px;background:#f48fb1"></i><span style="position:absolute;left:47.00px;top:2.19px;height:38px;line-height:38px;font-size:25px;letter-spacing:0.333px;white-space:pre;">Android</span></span><span class="chip" style="left:201.00px;top:24.20px;width:145.80px;height:44.60px;"><i class="dot" style="left:13.8px;top:12.00px;background:#9e9e9e"></i><span style="position:absolute;left:47.00px;top:2.19px;height:38px;line-height:38px;font-size:25px;letter-spacing:0.260px;white-space:pre;">Juyong</span></span></td><td><span style="position:absolute;left:15.24px;top:25.03px;height:44px;line-height:44px;transform:scaleX(0.9800);transform-origin:0 0;white-space:pre;">Nov</span></td><td><span class="alnk" style="position:absolute;left:16.03px;top:25.03px;height:44px;line-height:44px;transform:scaleX(0.9833);transform-origin:0 0;white-space:pre;">Edit</span><i class="abs" style="left:82.00px;top:35.00px;width:2.00px;height:25.00px;background:#303030"></i><span class="alnk" style="position:absolute;left:99.60px;top:25.03px;height:44px;line-height:44px;transform:scaleX(0.9975);transform-origin:0 0;white-space:pre;">Delete</span></td></tr><tr><td><span class="cb"></span></td><td><svg class="ic" viewBox="64 64 896 896" width="28.8" height="28.8" fill="currentColor" style="position:absolute;left:15.50px;top:32.10px;"><path d="M747.400 535.700c-.4-68.200 30.500-119.600 92.900-157.500-34.900-50-87.700-77.500-157.300-82.800-65.900-5.200-138 38.400-164.400 38.400-27.900 0-91.700-36.600-141.900-36.600C273.100 298.800 163 379.800 163 544.600c0 48.700 8.900 99 26.700 150.800 23.800 68.200 109.600 235.300 199.100 232.600 46.800-1.100 79.900-33.200 140.800-33.200 59.100 0 89.700 33.200 141.900 33.200 90.300-1.300 167.900-153.200 190.500-221.600-121.100-57.100-114.600-167.200-114.600-170.700zm-105.100-305c50.700-60.200 46.100-115 44.600-134.700-44.800 2.600-96.600 30.500-126.100 64.800-32.500 36.800-51.600 82.300-47.500 133.600 48.400 3.700 92.600-21.200 129-63.700z"/></svg><span style="position:absolute;left:58.70px;top:25.03px;height:44px;line-height:44px;letter-spacing:1.429px;white-space:pre;">20438935</span></td><td><span style="position:absolute;left:15.00px;top:25.03px;height:44px;line-height:44px;letter-spacing:0.070px;white-space:pre;">hzhou@hzhoudemac-mini</span></td><td><span style="position:absolute;left:14.62px;top:25.03px;height:44px;line-height:44px;transform:scaleX(0.9917);transform-origin:0 0;white-space:pre;">Build Server</span></td><td></td><td><span class="chip" style="left:16.00px;top:24.20px;width:116.50px;height:44.60px;"><i class="dot" style="left:13.8px;top:12.00px;background:#9c27b0"></i><span style="position:absolute;left:47.00px;top:2.19px;height:38px;line-height:38px;font-size:25px;transform:scaleX(0.9444);transform-origin:0 0;white-space:pre;">AMK</span></span><span class="chip" style="left:165.00px;top:24.20px;width:112.00px;height:44.60px;"><i class="dot" style="left:13.8px;top:12.00px;background:#008000"></i><span style="position:absolute;left:45.00px;top:2.19px;height:38px;line-height:38px;font-size:25px;letter-spacing:0.750px;white-space:pre;">Mac</span></span></td><td><span style="position:absolute;left:15.20px;top:25.03px;height:44px;line-height:44px;white-space:pre;">Due</span></td><td><span class="alnk" style="position:absolute;left:16.03px;top:25.03px;height:44px;line-height:44px;transform:scaleX(0.9833);transform-origin:0 0;white-space:pre;">Edit</span><i class="abs" style="left:82.00px;top:35.00px;width:2.00px;height:25.00px;background:#303030"></i><span class="alnk" style="position:absolute;left:99.60px;top:25.03px;height:44px;line-height:44px;transform:scaleX(0.9975);transform-origin:0 0;white-space:pre;">Delete</span></td></tr><tr><td><span class="cb"></span></td><td><svg class="ic" viewBox="64 64 896 896" width="28.8" height="28.8" fill="currentColor" style="position:absolute;left:15.50px;top:32.10px;"><path d="M270.100 741.700c0 23.400 19.100 42.500 42.600 42.500h48.700v120.400c0 30.500 24.500 55.400 54.600 55.400 30.200 0 54.600-24.800 54.600-55.400V784.100h85v120.400c0 30.500 24.500 55.400 54.600 55.400 30.200 0 54.600-24.800 54.600-55.400V784.100h48.700c23.500 0 42.600-19.100 42.600-42.500V346.400h-486v395.300zm357.100-600.100l44.900-65c2.600-3.800 2-8.900-1.500-11.400-3.500-2.400-8.500-1.200-11.100 2.600l-46.600 67.600c-30.700-12.100-64.900-18.800-100.800-18.800-35.900 0-70.100 6.700-100.800 18.800l-46.600-67.500c-2.600-3.800-7.600-5.100-11.100-2.600-3.500 2.400-4.100 7.400-1.500 11.400l44.900 65c-71.400 33.200-121.400 96.100-127.800 169.600h486c-6.600-73.600-56.700-136.500-128-169.700zM409.500 244.100a26.900 26.900 0 1126.900-26.900 26.970 26.970 0 01-26.900 26.900zm208.400 0a26.900 26.900 0 1126.900-26.900 26.970 26.970 0 01-26.900 26.900zm223.400 100.700c-30.200 0-54.600 24.800-54.600 55.400v216.400c0 30.500 24.500 55.400 54.600 55.400 30.200 0 54.600-24.800 54.600-55.400V400.100c.1-30.600-24.300-55.300-54.600-55.300zm-658.600 0c-30.200 0-54.600 24.800-54.600 55.400v216.400c0 30.500 24.500 55.400 54.600 55.400 30.200 0 54.600-24.800 54.600-55.400V400.100c0-30.600-24.500-55.300-54.600-55.300z"/></svg><span style="position:absolute;left:57.70px;top:25.03px;height:44px;line-height:44px;letter-spacing:0.111px;white-space:pre;">1700310865</span></td><td><span style="position:absolute;left:16.00px;top:25.03px;height:44px;line-height:44px;transform:scaleX(0.9955);transform-origin:0 0;white-space:pre;">sansumg2</span></td><td><span style="position:absolute;left:14.60px;top:25.03px;height:44px;line-height:44px;white-space:pre;">Monday</span></td><td><svg class="ic" viewBox="64 64 896 896" width="28" height="28" fill="currentColor" style="position:absolute;left:15.50px;top:32.50px;"><path d="M608 112c-167.900 0-304 136.100-304 304 0 70.300 23.900 135 63.900 186.500l-41.100 41.100-62.300-62.300a8.150 8.150 0 00-11.400 0l-39.800 39.800a8.150 8.150 0 000 11.400l62.300 62.300-44.900 44.900-62.300-62.300a8.150 8.150 0 00-11.400 0l-39.800 39.800a8.150 8.150 0 000 11.400l62.300 62.300-65.300 65.300a8.030 8.030 0 000 11.300l42.300 42.300c3.100 3.100 8.200 3.100 11.300 0l253.600-253.600A304.060 304.060 0 00608 720c167.900 0 304-136.100 304-304S775.900 112 608 112zm161.200 465.200C726.200 620.300 668.900 644 608 644c-60.900 0-118.200-23.700-161.200-66.800-43.100-43-66.800-100.300-66.800-161.200 0-60.900 23.700-118.200 66.800-161.200 43-43.100 100.300-66.800 161.200-66.800 60.900 0 118.200 23.700 161.200 66.800 43.100 43 66.800 100.300 66.800 161.200 0 60.900-23.700 118.200-66.800 161.200z"/></svg></td><td><span class="chip" style="left:16.00px;top:24.20px;width:152.50px;height:44.60px;"><i class="dot" style="left:13.8px;top:12.00px;background:#f48fb1"></i><span style="position:absolute;left:47.00px;top:2.19px;height:38px;line-height:38px;font-size:25px;letter-spacing:0.333px;white-space:pre;">Android</span></span><span class="chip" style="left:201.00px;top:24.20px;width:142.70px;height:44.60px;"><i class="dot" style="left:13.8px;top:12.00px;background:#3f51b5"></i><span style="position:absolute;left:46.00px;top:2.19px;height:38px;line-height:38px;font-size:25px;letter-spacing:0.040px;white-space:pre;">Changi</span></span><span class="chip" style="left:376.20px;top:24.20px;width:151.00px;height:44.60px;"><i class="dot" style="left:13.8px;top:12.00px;background:#00bcd4"></i><span style="position:absolute;left:46.00px;top:2.19px;height:38px;line-height:38px;font-size:25px;letter-spacing:0.214px;white-space:pre;">CityHall</span></span></td><td><span style="position:absolute;left:15.20px;top:25.03px;height:44px;line-height:44px;white-space:pre;">Next</span></td><td><span class="alnk" style="position:absolute;left:16.03px;top:25.03px;height:44px;line-height:44px;transform:scaleX(0.9833);transform-origin:0 0;white-space:pre;">Edit</span><i class="abs" style="left:82.00px;top:35.00px;width:2.00px;height:25.00px;background:#303030"></i><span class="alnk" style="position:absolute;left:99.60px;top:25.03px;height:44px;line-height:44px;transform:scaleX(0.9975);transform-origin:0 0;white-space:pre;">Delete</span></td></tr><tr><td><span class="cb"></span></td><td><svg class="ic" viewBox="64 64 896 896" width="28.8" height="28.8" fill="currentColor" style="position:absolute;left:15.50px;top:32.10px;"><path d="M512 64C264.600 64 64 264.600 64 512s200.600 448 448 448 448-200.600 448-448S759.400 64 512 64zm210.500 612.400c-11.500 1.400-44.900-52.700-44.900-52.700 0 31.300-16.200 72.200-51.100 101.800 16.900 5.200 54.900 19.200 45.900 34.400-7.300 12.300-125.600 7.900-159.800 4-34.200 3.800-152.500 8.300-159.800-4-9.100-15.200 28.900-29.200 45.800-34.400-35-29.500-51.100-70.400-51.100-101.800 0 0-33.400 54.100-44.900 52.700-5.400-.7-12.400-29.600 9.400-99.700 10.300-33 22-60.500 40.200-105.800-3.100-116.900 45.300-215 160.400-215 113.900 0 163.300 96.100 160.400 215 18.100 45.200 29.900 72.800 40.200 105.800 21.700 70.100 14.600 99.100 9.300 99.700z"/></svg><span style="position:absolute;left:58.70px;top:25.03px;height:44px;line-height:44px;letter-spacing:0.562px;white-space:pre;">513354376</span></td><td><span style="position:absolute;left:15.03px;top:25.03px;height:44px;line-height:44px;transform:scaleX(0.9857);transform-origin:0 0;white-space:pre;">hzhou@fedora</span></td><td><span style="position:absolute;left:14.66px;top:25.03px;height:44px;line-height:44px;transform:scaleX(0.9689);transform-origin:0 0;white-space:pre;">Relay server</span></td><td></td><td><span class="chip" style="left:16.00px;top:24.20px;width:123.60px;height:44.60px;"><i class="dot" style="left:13.8px;top:12.00px;background:#ff0000"></i><span style="position:absolute;left:45.00px;top:2.19px;height:38px;line-height:38px;font-size:25px;letter-spacing:0.025px;white-space:pre;">Linux</span></span><span class="chip" style="left:172.10px;top:24.20px;width:136.40px;height:44.60px;"><i class="dot" style="left:13.8px;top:12.00px;background:#795548"></i><span style="position:absolute;left:45.00px;top:2.19px;height:38px;line-height:38px;font-size:25px;letter-spacing:0.475px;white-space:pre;">Neson</span></span></td><td><span style="position:absolute;left:16.20px;top:25.03px;height:44px;line-height:44px;letter-spacing:0.100px;white-space:pre;">Yishun</span></td><td><span class="alnk" style="position:absolute;left:16.03px;top:25.03px;height:44px;line-height:44px;transform:scaleX(0.9833);transform-origin:0 0;white-space:pre;">Edit</span><i class="abs" style="left:82.00px;top:35.00px;width:2.00px;height:25.00px;background:#303030"></i><span class="alnk" style="position:absolute;left:99.60px;top:25.03px;height:44px;line-height:44px;transform:scaleX(0.9975);transform-origin:0 0;white-space:pre;">Delete</span></td></tr><tr><td><span class="cb"></span></td><td><svg class="ic" viewBox="64 64 896 896" width="28.8" height="28.8" fill="currentColor" style="position:absolute;left:15.50px;top:32.10px;"><path d="M747.400 535.700c-.4-68.200 30.500-119.600 92.900-157.500-34.900-50-87.700-77.500-157.300-82.800-65.900-5.200-138 38.400-164.400 38.400-27.900 0-91.700-36.600-141.900-36.600C273.100 298.800 163 379.800 163 544.600c0 48.700 8.900 99 26.700 150.800 23.800 68.200 109.600 235.300 199.100 232.600 46.800-1.100 79.900-33.200 140.800-33.200 59.100 0 89.700 33.200 141.900 33.200 90.300-1.300 167.900-153.200 190.500-221.600-121.100-57.100-114.600-167.200-114.600-170.700zm-105.100-305c50.700-60.200 46.100-115 44.600-134.700-44.800 2.600-96.600 30.500-126.100 64.800-32.500 36.800-51.600 82.300-47.500 133.600 48.400 3.700 92.600-21.200 129-63.700z"/></svg><span style="position:absolute;left:57.70px;top:25.03px;height:44px;line-height:44px;letter-spacing:0.320px;white-space:pre;">mac_m2</span></td><td><span style="position:absolute;left:15.00px;top:25.03px;height:44px;line-height:44px;letter-spacing:0.159px;white-space:pre;">hzhou@zhous-macbook-air</span></td><td><span style="position:absolute;left:15.62px;top:25.03px;height:44px;line-height:44px;transform:scaleX(0.9833);transform-origin:0 0;white-space:pre;">Canberra</span></td><td><svg class="ic" viewBox="64 64 896 896" width="28" height="28" fill="currentColor" style="position:absolute;left:15.50px;top:32.50px;"><path d="M608 112c-167.900 0-304 136.100-304 304 0 70.300 23.900 135 63.900 186.500l-41.100 41.100-62.300-62.300a8.150 8.150 0 00-11.400 0l-39.800 39.800a8.150 8.150 0 000 11.400l62.300 62.300-44.900 44.900-62.300-62.300a8.150 8.150 0 00-11.400 0l-39.800 39.800a8.150 8.150 0 000 11.400l62.300 62.300-65.300 65.300a8.030 8.030 0 000 11.300l42.300 42.300c3.100 3.100 8.200 3.100 11.300 0l253.600-253.600A304.060 304.060 0 00608 720c167.900 0 304-136.100 304-304S775.900 112 608 112zm161.200 465.200C726.200 620.300 668.900 644 608 644c-60.900 0-118.200-23.700-161.200-66.800-43.100-43-66.800-100.300-66.800-161.200 0-60.900 23.700-118.200 66.800-161.200 43-43.100 100.300-66.800 161.200-66.800 60.900 0 118.200 23.700 161.200 66.800 43.100 43 66.800 100.300 66.800 161.200 0 60.900-23.700 118.200-66.800 161.200z"/></svg></td><td><span class="chip" style="left:16.00px;top:24.20px;width:151.60px;height:44.60px;"><i class="dot" style="left:13.8px;top:12.00px;background:#00bcd4"></i><span style="position:absolute;left:46.00px;top:2.19px;height:38px;line-height:38px;font-size:25px;letter-spacing:0.300px;white-space:pre;">CityHall</span></span><span class="chip" style="left:200.10px;top:24.20px;width:130.40px;height:44.60px;"><i class="dot" style="left:13.8px;top:12.00px;background:#0000ff"></i><span style="position:absolute;left:45.00px;top:2.19px;height:38px;line-height:38px;font-size:25px;letter-spacing:0.300px;white-space:pre;">Home</span></span><span class="chip" style="left:363.00px;top:24.20px;width:111.40px;height:44.60px;"><i class="dot" style="left:13.8px;top:12.00px;background:#008000"></i><span style="position:absolute;left:45.00px;top:2.19px;height:38px;line-height:38px;font-size:25px;letter-spacing:0.450px;white-space:pre;">Mac</span></span></td><td><span style="position:absolute;left:15.28px;top:25.03px;height:44px;line-height:44px;transform:scaleX(0.9610);transform-origin:0 0;white-space:pre;">HUST</span></td><td><span class="alnk" style="position:absolute;left:16.03px;top:25.03px;height:44px;line-height:44px;transform:scaleX(0.9833);transform-origin:0 0;white-space:pre;">Edit</span><i class="abs" style="left:82.00px;top:35.00px;width:2.00px;height:25.00px;background:#303030"></i><span class="alnk" style="position:absolute;left:99.60px;top:25.03px;height:44px;line-height:44px;transform:scaleX(0.9975);transform-origin:0 0;white-space:pre;">Delete</span></td></tr></tbody></table><span style="position:absolute;left:1650.00px;top:744.33px;height:44px;line-height:44px;letter-spacing:0.308px;white-space:pre;">1-5 of 5 items</span><svg class="ic" viewBox="64 64 896 896" width="24" height="24" fill="currentColor" style="position:absolute;left:1858.00px;top:754.00px;color:rgba(255,255,255,.25)"><path d="M724 218.300V141c0-6.700-7.700-10.400-12.900-6.300L260.300 486.800a31.860 31.860 0 000 50.300l450.800 352.100c5.300 4.100 12.900.4 12.900-6.300v-77.300c0-4.900-2.300-9.600-6.100-12.600l-360-281 360-281.100c3.800-3 6.100-7.700 6.100-12.600z"/></svg><div class="abs" style="left:1894.00px;top:741.50px;width:48.00px;height:48.00px;border:2px solid #1a7de0;border-radius:12px"><span class="lnk" style="position:absolute;left:15.50px;top:0.83px;height:44px;line-height:44px;font-weight:700;white-space:pre;">1</span></div><svg class="ic" viewBox="64 64 896 896" width="24" height="24" fill="currentColor" style="position:absolute;left:1955.00px;top:754.00px;color:rgba(255,255,255,.25)"><path d="M765.700 486.800L314.900 134.700A7.970 7.970 0 00302 141v77.300c0 4.900 2.300 9.600 6.100 12.600l360 281.100-360 281.100c-3.900 3-6.100 7.700-6.100 12.600V883c0 6.700 7.700 10.400 12.900 6.300l450.800-352.100a31.960 31.960 0 000-50.400z"/></svg><div class="inp" style="left:1994.00px;top:741.50px;width:195.50px;height:48.00px;"><span style="position:absolute;left:14.40px;top:0.83px;height:44px;line-height:44px;letter-spacing:0.125px;white-space:pre;">20 / page</span><svg class="ic" viewBox="64 64 896 896" width="24" height="24" fill="currentColor" style="position:absolute;left:149.00px;top:11.00px;color:rgba(255,255,255,.25)"><path d="M884 256h-75c-5.100 0-9.900 2.500-12.900 6.600L512 654.200 227.900 262.600c-3-4.100-7.800-6.600-12.900-6.600h-75c-6.500 0-10.300 7.400-6.500 12.700l352.600 486.100c12.800 17.600 39 17.600 51.700 0l352.600-486.100c3.900-5.300.1-12.700-6.400-12.700z"/></svg></div></section></div></body></html>
